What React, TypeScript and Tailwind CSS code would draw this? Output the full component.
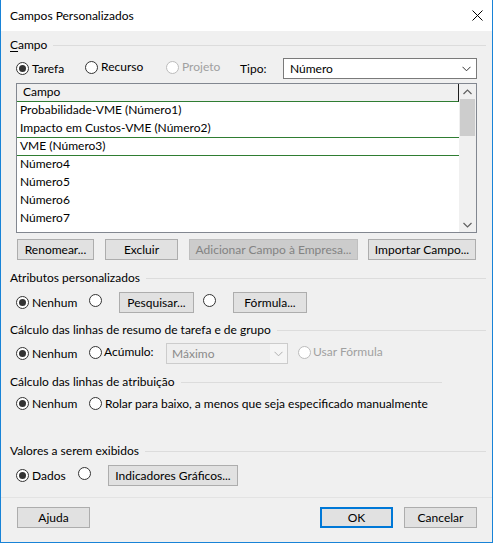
import React from "react";

function Radio({ checked = false, disabled = false, label, gap = "ml-[3px]" }: { checked?: boolean; disabled?: boolean; label?: string; gap?: string }) {
  return (
    <span className="inline-flex items-center">
      <span
        className={
          "w-[13px] h-[13px] rounded-full border bg-white flex items-center justify-center shrink-0 " +
          (disabled ? "border-[#bcbcbc]" : "border-[#333333]")
        }
      >
        {checked && <span className="w-[7px] h-[7px] rounded-full bg-[#333333]" />}
      </span>
      {label && <span className={gap + " whitespace-nowrap " + (disabled ? "text-[#a0a0a0]" : "text-black")}>{label}</span>}
    </span>
  );
}

function Btn({ children, w, disabled = false, primary = false }: { children: React.ReactNode; w: string; disabled?: boolean; primary?: boolean }) {
  return (
    <div
      className={
        w +
        " h-[21px] flex items-center justify-center shrink-0 whitespace-nowrap " +
        (disabled
          ? "bg-[#cccccc] border border-[#bfbfbf] text-[#838383]"
          : primary
          ? "bg-[#e1e1e1] border-2 border-[#0078d7] text-black"
          : "bg-[#e1e1e1] border border-[#adadad] text-black")
      }
    >
      {children}
    </div>
  );
}

function GroupLabel({ children, w }: { children: React.ReactNode; w: string }) {
  return (
    <div className={"ml-[9px] h-[16px] flex items-center " + w}>
      <span className="whitespace-nowrap">{children}</span>
      <span className="flex-1 h-px bg-[#dcdcdc] ml-[6px]" />
    </div>
  );
}

function Chevron({ color = "#333333" }: { color?: string }) {
  return (
    <svg width="9" height="6" viewBox="0 0 9 6">
      <polyline points="0.5,0.8 4.5,4.8 8.5,0.8" fill="none" stroke={color} strokeWidth="1" />
    </svg>
  );
}

export default function App() {
  const rows = [
    { t: "Probabilidade-VME (Número1)", b: false },
    { t: "Impacto em Custos-VME (Número2)", b: true },
    { t: "VME (Número3)", b: true },
    { t: "Número4", b: false },
    { t: "Número5", b: false },
    { t: "Número6", b: false },
    { t: "Número7", b: false },
    { t: "Número8", b: false },
  ];
  return (
    <div className="w-[493px] h-[543px] border-x border-b border-[#1883d7] bg-[#f0f0f0] flex flex-col font-['Lato',sans-serif] text-[12px] leading-[16px] text-black overflow-hidden">
      {/* title bar */}
      <div className="h-[31px] bg-white flex items-center justify-between pl-[9px] pr-[9px] shrink-0">
        <span className="text-[12px]">Campos Personalizados</span>
        <svg width="11" height="11" viewBox="0 0 11 11">
          <line x1="0.5" y1="0.5" x2="10.5" y2="10.5" stroke="#000" strokeWidth="1" />
          <line x1="10.5" y1="0.5" x2="0.5" y2="10.5" stroke="#000" strokeWidth="1" />
        </svg>
      </div>

      {/* Campo */}
      <div className="mt-[6px]">
        <GroupLabel w="w-[476px]">
          <span className="underline underline-offset-2">C</span>ampo
        </GroupLabel>
      </div>
      <div className="mt-[5px] ml-[15px] h-[21px] flex items-center">
        <div className="w-[69px]"><Radio checked label="Tarefa" /></div>
        <div className="w-[81px]"><Radio label="Recurso" /></div>
        <div className="w-[74px]"><Radio disabled label="Projeto" /></div>
        <div className="w-[43px]">Tipo:</div>
        <div className="w-[194px] h-[21px] border border-[#7a7a7a] bg-white flex items-center justify-between pl-[6px] pr-[5px]">
          <span>Número</span>
          <Chevron />
        </div>
      </div>

      {/* list */}
      <div className="mt-[4px] ml-[15px] w-[461px] h-[150px] border border-[#828790] bg-white flex overflow-hidden">
        <div className="flex-1 flex flex-col overflow-hidden">
          <div className="h-[18px] shrink-0 bg-[#f0f0f0] border-r border-[#1e1e1e] border-b border-b-[#2f7d32] flex items-center pl-[6px] pb-[1px]">
            Campo
          </div>
          {rows.map((r, i) => (
            <div
              key={i}
              className={
                "h-[18px] shrink-0 flex items-center pl-[3px] pb-[2px] whitespace-nowrap " +
                (r.b ? "border-b border-[#2f7d32]" : "")
              }
            >
              {r.t}
            </div>
          ))}
        </div>
        <div className="w-[17px] bg-[#f0f0f0] flex flex-col shrink-0">
          <div className="h-[15px] flex items-center justify-center">
            <svg width="9" height="6" viewBox="0 0 9 6">
              <polyline points="0.5,5 4.5,1 8.5,5" fill="none" stroke="#606060" strokeWidth="1.2" />
            </svg>
          </div>
          <div className="ml-[1px] w-[15px] h-[37px] bg-[#cdcdcd]" />
          <div className="flex-1" />
          <div className="h-[15px] flex items-center justify-center">
            <svg width="9" height="6" viewBox="0 0 9 6">
              <polyline points="0.5,1 4.5,5 8.5,1" fill="none" stroke="#606060" strokeWidth="1.2" />
            </svg>
          </div>
        </div>
      </div>

      {/* list buttons */}
      <div className="mt-[6px] ml-[16px] flex items-center">
        <Btn w="w-[77px]">Renomear...</Btn>
        <div className="ml-[11px]"><Btn w="w-[73px]">Excluir</Btn></div>
        <div className="ml-[11px]"><Btn w="w-[169px]" disabled>Adicionar Campo à Empresa...</Btn></div>
        <div className="ml-[10px]"><Btn w="w-[108px]">Importar Campo...</Btn></div>
      </div>

      {/* Atributos */}
      <div className="mt-[10px]">
        <GroupLabel w="w-[476px]">Atributos personalizados</GroupLabel>
      </div>
      <div className="mt-[6px] ml-[15px] h-[21px] flex items-center">
        <div className="w-[73px]"><Radio checked label="Nenhum" /></div>
        <div className="w-[30px]"><Radio /></div>
        <Btn w="w-[75px]">Pesquisar...</Btn>
        <div className="ml-[9px] w-[30px]"><Radio /></div>
        <Btn w="w-[74px]">Fórmula...</Btn>
      </div>

      {/* Resumo */}
      <div className="mt-[9px]">
        <GroupLabel w="w-[476px]">Cálculo das linhas de resumo de tarefa e de grupo</GroupLabel>
      </div>
      <div className="mt-[5px] ml-[15px] h-[21px] flex items-center">
        <div className="w-[73px]"><Radio checked label="Nenhum" /></div>
        <div className="w-[77px]"><Radio label="Acúmulo:" gap="ml-[2px]" /></div>
        <div className="w-[122px] h-[21px] border border-[#cccccc] bg-[#f5f5f5] flex items-stretch">
          <div className="flex-1 flex items-center pl-[5px] bg-[#eeeeee] text-[#8a8a8a]">Máximo</div>
          <div className="w-[17px] flex items-center justify-center">
            <Chevron color="#b0b0b0" />
          </div>
        </div>
        <div className="ml-[10px]"><Radio disabled label="Usar Fórmula" gap="ml-[2px]" /></div>
      </div>

      {/* Atribuição */}
      <div className="mt-[10px]">
        <GroupLabel w="w-[432px]">Cálculo das linhas de atribuição</GroupLabel>
      </div>
      <div className="mt-[3px] ml-[15px] h-[21px] flex items-center">
        <div className="w-[73px]"><Radio checked label="Nenhum" /></div>
        <Radio label="Rolar para baixo, a menos que seja especificado manualmente" />
      </div>

      {/* Valores */}
      <div className="mt-[29px]">
        <GroupLabel w="w-[476px]">Valores a serem exibidos</GroupLabel>
      </div>
      <div className="mt-[6px] ml-[15px] h-[21px] flex items-center">
        <div className="w-[62px]"><Radio checked label="Dados" /></div>
        <div className="w-[30px]"><Radio /></div>
        <Btn w="w-[130px]">Indicadores Gráficos...</Btn>
      </div>

      {/* separator */}
      <div className="mt-[11px] h-px bg-[#e3e3e3]" />

      {/* bottom buttons */}
      <div className="mt-[9px] ml-[16px] mr-[15px] flex items-center">
        <Btn w="w-[73px]">Ajuda</Btn>
        <div className="flex-1" />
        <Btn w="w-[73px]" primary>OK</Btn>
        <div className="ml-[11px]"><Btn w="w-[73px]">Cancelar</Btn></div>
      </div>
    </div>
  );
}
